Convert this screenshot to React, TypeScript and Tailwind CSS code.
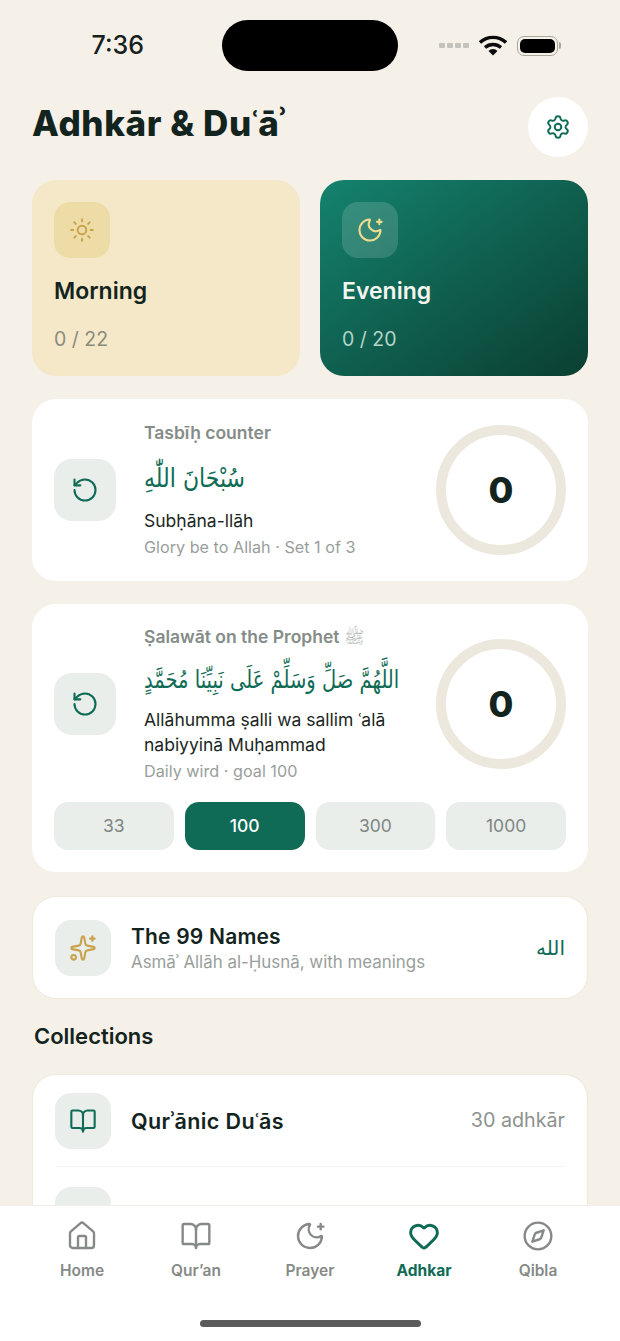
import { BookOpen, Compass, Heart, House, MoonStar, RotateCcw, Settings, Sparkles, Sun } from "lucide-react";

const nums = ["33", "100", "300", "1000"];

const tabs = [
  { label: "Home", icon: House },
  { label: "Qur’an", icon: BookOpen },
  { label: "Prayer", icon: MoonStar },
  { label: "Adhkar", icon: Heart, active: true },
  { label: "Qibla", icon: Compass },
];

function ResetBox() {
  return (
    <div className="flex h-[62px] w-[62px] shrink-0 items-center justify-center rounded-[18px] bg-[#e9eeeb]">
      <RotateCcw className="h-7 w-7 text-[#0f6b55]" strokeWidth={1.8} />
    </div>
  );
}

function Ring() {
  return (
    <div className="flex h-[130px] w-[130px] shrink-0 items-center justify-center rounded-full border-[10px] border-[#ede8dd]">
      <span className="text-[36px] font-extrabold leading-none text-[#13241e]">0</span>
    </div>
  );
}

export default function App() {
  return (
    <div className="flex h-screen flex-col overflow-hidden bg-[#f5f0e8] font-['Inter',sans-serif]">
      <div className="flex h-[97px] shrink-0 items-start pt-5">
        <div className="flex h-[51px] w-[222px] items-center justify-end pr-[78px] text-[25px] font-medium text-[#16211d]">
          7:36
        </div>
        <div className="h-[51px] w-[176px] rounded-full bg-black" />
        <div className="flex h-[51px] flex-1 items-center pl-[41px]">
          <div className="flex gap-[2px]">
            <span className="h-[5px] w-[6px] rounded-[1px] bg-[#c4c2bd]" />
            <span className="h-[5px] w-[6px] rounded-[1px] bg-[#c4c2bd]" />
            <span className="h-[5px] w-[6px] rounded-[1px] bg-[#c4c2bd]" />
            <span className="h-[5px] w-[6px] rounded-[1px] bg-[#c4c2bd]" />
          </div>
          <svg viewBox="0 0 28 21" className="ml-[10px] h-[21px] w-[28px]">
            <path d="M1 7.5a19 19 0 0 1 26 0" fill="none" stroke="#0b0b0b" strokeWidth="3.4" />
            <path d="M6 12.5a12 12 0 0 1 16 0" fill="none" stroke="#0b0b0b" strokeWidth="3.4" />
            <path d="M9.5 16a6 6 0 0 1 9 0L14 20.5z" fill="#0b0b0b" />
          </svg>
          <div className="ml-[10px] flex items-center">
            <div className="h-[20px] w-[41px] rounded-[7px] border border-[#a8a69f] p-[2px]">
              <div className="h-full w-full rounded-[5px] bg-black" />
            </div>
            <div className="ml-[1px] h-[7px] w-[2px] rounded-r-full bg-[#a8a69f]" />
          </div>
        </div>
      </div>

      <div className="flex min-h-0 flex-1 flex-col overflow-hidden px-8">
        <div className="flex h-[60px] shrink-0 items-start justify-between">
          <h1 className="mt-[5px] text-[35px] font-extrabold leading-[42px] tracking-[0.6px] text-[#13241e]">Adhkār &amp; Duʿāʾ</h1>
          <div className="flex h-[60px] w-[60px] items-center justify-center rounded-full bg-white">
            <Settings className="h-[26px] w-[26px] text-[#0f6b55]" strokeWidth={1.8} />
          </div>
        </div>

        <div className="mt-[23px] flex shrink-0 gap-5">
          <div className="h-[196px] flex-1 rounded-[24px] bg-[#f4e8c8] px-[22px] pt-[22px]">
            <div className="flex h-14 w-14 items-center justify-center rounded-[16px] bg-[#eedca6]">
              <Sun className="h-[26px] w-[26px] text-[#c9a24d]" strokeWidth={1.8} />
            </div>
            <div className="mt-[16px] text-[23px] font-semibold leading-[34px] text-[#13241e]">Morning</div>
            <div className="mt-[17px] text-[19.5px] leading-[28px] text-[#8d8a7d]">0 / 22</div>
          </div>
          <div className="h-[196px] flex-1 rounded-[24px] bg-linear-to-br from-[#14836f] to-[#0a3f31] px-[22px] pt-[22px]">
            <div className="flex h-14 w-14 items-center justify-center rounded-[16px] bg-white/15">
              <MoonStar className="h-7 w-7 text-[#efdc8f]" strokeWidth={1.8} />
            </div>
            <div className="mt-[16px] text-[23px] font-semibold leading-[34px] text-[#f3f5ee]">Evening</div>
            <div className="mt-[17px] text-[19.5px] leading-[28px] text-[#b5d4ca]">0 / 20</div>
          </div>
        </div>

        <div className="mt-[23px] flex h-[182px] shrink-0 items-center rounded-[24px] bg-white px-[22px]">
          <ResetBox />
          <div className="ml-[28px] min-w-0 flex-1">
            <div className="text-[17.5px] font-semibold leading-[22px] text-[#858c88]">Tasbīḥ counter</div>
            <div dir="rtl" className="mt-[13px] w-fit origin-left scale-y-[1.2] font-['DejaVu_Sans',sans-serif] text-[22px] leading-[44px] text-[#0f6b55]">
              سُبْحَانَ اللّٰهِ
            </div>
            <div className="mt-[8px] text-[17.5px] leading-[24px] text-[#1a2622]">Subḥāna-llāh</div>
            <div className="mt-[3px] text-[16.2px] leading-[22px] text-[#999e9b]">Glory be to Allah · Set 1 of 3</div>
          </div>
          <Ring />
        </div>

        <div className="mt-[23px] h-[268px] shrink-0 rounded-[24px] bg-white px-[22px] pt-[22px]">
          <div className="flex items-center">
            <ResetBox />
            <div className="ml-[28px] min-w-0 flex-1">
              <div className="whitespace-nowrap text-[17.5px] font-semibold leading-[22px] text-[#858c88]">
                Ṣalawāt on the Prophet <span className="text-[17px] font-normal text-[#b5b9b6]">ﷺ</span>
              </div>
              <div dir="rtl" className="mt-[10px] w-fit origin-left scale-y-[1.25] whitespace-nowrap font-['DejaVu_Sans',sans-serif] text-[19.5px] leading-[44px] text-[#0f6b55]">
                اللَّهُمَّ صَلِّ وَسَلِّمْ عَلَى نَبِيِّنَا مُحَمَّدٍ
              </div>
              <div className="mt-[5px] w-[270px] text-[17.5px] leading-[25px] text-[#1a2622]">Allāhumma ṣalli wa sallim ʿalā nabiyyinā Muḥammad</div>
              <div className="mt-[3px] text-[16.2px] leading-[22px] text-[#999e9b]">Daily wird · goal 100</div>
            </div>
            <Ring />
          </div>
          <div className="mt-[20px] flex gap-[11px]">
            {nums.map((n) => (
              <div
                key={n}
                className={
                  n === "100"
                    ? "flex h-12 flex-1 items-center justify-center rounded-[14px] bg-[#0f6b55] text-[17.5px] font-medium text-white"
                    : "flex h-12 flex-1 items-center justify-center rounded-[14px] bg-[#e9eeeb] text-[17.5px] text-[#7f8683]"
                }
              >
                {n}
              </div>
            ))}
          </div>
        </div>

        <div className="mt-[24px] flex h-[103px] shrink-0 items-center rounded-[24px] border border-[#efe9dc] bg-white px-[22px]">
          <div className="flex h-14 w-14 shrink-0 items-center justify-center rounded-[16px] bg-[#e9eeeb]">
            <Sparkles className="h-7 w-7 text-[#c9a24d]" strokeWidth={1.8} />
          </div>
          <div className="ml-[20px] min-w-0 flex-1 pt-[2px]">
            <div className="text-[21px] font-semibold leading-[26px] tracking-[0.2px] text-[#13241e]">The 99 Names</div>
            <div className="text-[16.9px] leading-[24px] text-[#999e9b]">Asmāʾ Allāh al-Ḥusnā, with meanings</div>
          </div>
          <div className="font-['DejaVu_Sans',sans-serif] text-[20px] text-[#0f6b55]">الله</div>
        </div>

        <h2 className="mt-[23px] shrink-0 pl-[2px] text-[22px] font-semibold leading-[28px] text-[#13241e]">Collections</h2>

        <div className="mt-[24px] shrink-0 rounded-[24px] border border-[#efe9dc] bg-white px-[22px]">
          <div className="flex h-[92px] items-center border-b border-[#f3f3f0] pt-[1px]">
            <div className="flex h-14 w-14 shrink-0 items-center justify-center rounded-[16px] bg-[#e9eeeb]">
              <BookOpen className="h-7 w-7 text-[#0f6b55]" strokeWidth={1.8} />
            </div>
            <div className="ml-[20px] flex-1 text-[21.5px] font-semibold tracking-[0.4px] text-[#13241e]">Qurʾānic Duʿās</div>
            <div className="text-[19.7px] text-[#8d918e]">30 adhkār</div>
          </div>
          <div className="flex h-[92px] items-start pt-[20px]">
            <div className="h-14 w-14 rounded-[16px] bg-[#e9eeeb]" />
          </div>
        </div>
      </div>

      <div className="flex h-[136px] shrink-0 flex-col border-t border-[#f1efe9] bg-white">
        <div className="flex px-[25px] pt-[14px]">
          {tabs.map((t) => (
            <div key={t.label} className="flex flex-1 flex-col items-center">
              <t.icon className={t.active ? "h-8 w-8 text-[#0f6b55]" : "h-8 w-8 text-[#858a87]"} strokeWidth={t.active ? 2.2 : 1.8} />
              <span className={t.active ? "mt-[9px] text-[15.5px] font-bold leading-5 text-[#0f6b55]" : "mt-[9px] text-[15.5px] font-semibold leading-5 text-[#858a87]"}>
                {t.label}
              </span>
            </div>
          ))}
        </div>
        <div className="mt-[39px] flex justify-center">
          <div className="h-[7px] w-[221px] rounded-full bg-[#5b5b5b]" />
        </div>
      </div>
    </div>
  );
}
